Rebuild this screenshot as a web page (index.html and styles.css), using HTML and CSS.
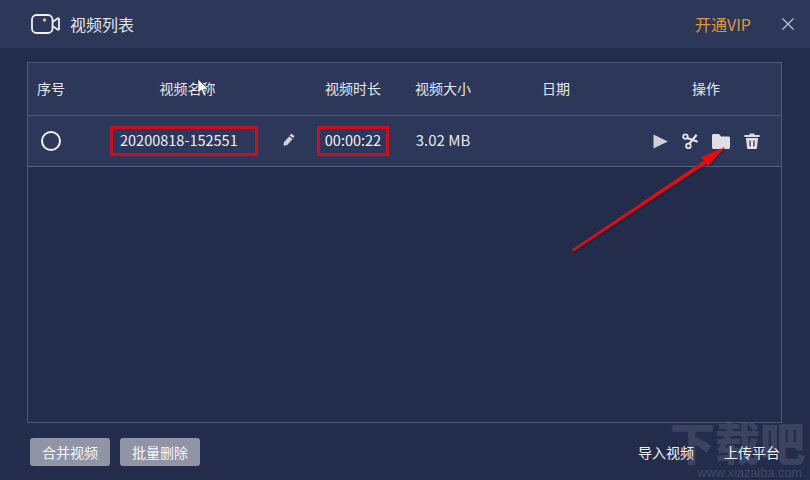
FILE: index.html
```html
<!DOCTYPE html>
<html lang="zh">
<head>
<meta charset="utf-8">
<title>视频列表</title>
<link rel="stylesheet" href="styles.css">
</head>
<body>
<div class="app">
  <div class="watermark">
    <span class="wm-big">下载吧</span>
    <span class="wm-url">www.xiazaiba.com</span>
  </div>
  <header class="titlebar">
    <svg class="cam" width="29" height="20" viewBox="0 0 29 20">
      <rect x="1" y="1" width="20.500" height="18" rx="4.500" fill="none" stroke="#eef0f4" stroke-width="1.800"/>
      <path d="M21.500 8 L26.500 4.500 Q28 3.800 28 5.200 V14.800 Q28 16.200 26.500 15.500 L21.500 12" fill="none" stroke="#eef0f4" stroke-width="1.800"/>
      <circle cx="13.500" cy="6" r="1.700" fill="#d8c080"/>
    </svg>
    <span class="title">视频列表</span>
    <span class="vip">开通VIP</span>
    <svg class="close" width="12" height="12" viewBox="0 0 12 12"><path d="M.5 .5 L11.500 11.500 M11.500 .5 L.5 11.500" stroke="#b4bacb" stroke-width="1.400"/></svg>
  </header>
  <main class="content">
    <section class="table">
      <div class="row head">
        <div class="c c-seq">序号</div>
        <div class="c c-name">视频名称</div>
        <div class="c c-dur">视频时长</div>
        <div class="c c-size">视频大小</div>
        <div class="c c-date">日期</div>
        <div class="c c-ops">操作</div>
      </div>
      <div class="row item">
        <div class="c c-seq"><span class="radio"></span></div>
        <div class="c c-name name-cell">
          <span class="mark mark-name">20200818-152551</span>
          <svg class="pencil" width="12" height="13" viewBox="0 0 12 13"><path d="M8 .6 L11.500 3 L10.200 5.100 L6.700 2.700 Z M6.100 3.500 L9.600 5.900 L4.300 12.100 L.6 12.800 L.9 9.300 Z" fill="#cfd2db"/></svg>
        </div>
        <div class="c c-dur"><span class="mark mark-dur">00:00:22</span></div>
        <div class="c c-size">3.02 MB</div>
        <div class="c c-date"></div>
        <div class="c c-ops ops">
          <svg width="15" height="15" viewBox="0 0 15 15"><path d="M.5 .5 L14.800 7.500 L.5 14.500 Z" fill="#cfd1d8"/></svg>
          <svg width="16" height="16" viewBox="0 0 16 16"><g fill="none" stroke="#e4e5ea"><circle cx="3.400" cy="3.600" r="2.300" stroke-width="1.800"/><circle cx="6.400" cy="13" r="2.300" stroke-width="1.800"/><path d="M5.200 5 L15.600 8.800 M7.400 10.800 L14.600 1.800" stroke-width="2.200"/></g></svg>
          <svg width="18" height="15" viewBox="0 0 18 15"><path d="M1.400 0 H7 L9 2.400 H16.600 Q18 2.400 18 3.800 V13.600 Q18 15 16.600 15 H1.400 Q0 15 0 13.600 V1.400 Q0 0 1.400 0 Z" fill="#e0e0e4"/></svg>
          <svg width="16" height="16" viewBox="0 0 16 16"><path d="M5.600 2 V.4 H10.400 V2 H15.600 V4 H.4 V2 Z M2 5 H14 L13 15 Q13 16 12 16 H4 Q3 16 3 15 Z" fill="#e0e0e4"/><path d="M6 7.500 V13.500 M10 7.500 V13.500" stroke="#2d3759" stroke-width="1.300"/></svg>
        </div>
      </div>
    </section>
    <footer class="actions">
      <button class="btn">合并视频</button>
      <button class="btn">批量删除</button>
      <div class="links">
        <span>导入视频</span>
        <span>上传平台</span>
      </div>
    </footer>
  </main>
  <svg class="overlay" width="810" height="480" viewBox="0 0 810 480">
    <defs><filter id="s" x="-10%" y="-10%" width="120%" height="120%"><feDropShadow dx="1" dy="1" stdDeviation="1" flood-color="#0c1020" flood-opacity=".5"/></filter></defs>
    <path d="M572 249.500 L704 160.500 L701 157 L725 147 L708 166 L706 163.800 L573 251.500 Z" fill="#e30f14" filter="url(#s)"/>
    <path d="M198 79 V93 L201.500 90 L204 96 L206 95 L203.500 89.500 L208 89 Z" fill="#fff" stroke="#222" stroke-width=".6"/>
  </svg>
</div>
</body>
</html>
```

FILE: styles.css
```css
* { box-sizing: border-box; }
html, body { margin: 0; padding: 0; }
body {
  width: 810px;
  height: 480px;
  overflow: hidden;
  background: #232d4b;
  font-family: "Noto Sans CJK SC", "Noto Sans", sans-serif;
  font-size: 14px;
  color: #e6e8ee;
}
.app { position: relative; width: 810px; height: 480px; display: flex; flex-direction: column; }
.titlebar {
  position: relative;
  height: 48px;
  flex: none;
  display: flex;
  align-items: center;
  padding: 0 16px 0 31px;
  background: #2d3759;
}
.cam { margin-right: 10px; margin-top: -1px; }
.title { font-size: 16px; color: #e3e5eb; flex: 1; }
.vip { font-size: 16px; color: #e2963a; margin-right: 31px; }
.content { position: relative; flex: 1; display: flex; flex-direction: column; padding: 14px 28px 14px 27px; }
.table {
  height: 361px;
  flex: none;
  border: 1px solid #4d5877;
}
.row { display: flex; background: #2d3759; }
.head { height: 53px; border-bottom: 1px solid #4d5877; padding-bottom: 3px; }
.item { height: 51px; border-bottom: 1px solid #5a6482; }
.c { display: flex; align-items: center; justify-content: center; }
.c-seq { width: 46px; }
.c-name { width: 227px; }
.c-dur { width: 104px; }
.c-size { width: 76px; }
.c-date { width: 150px; }
.c-ops { width: 150px; }
.item .c-size { font-size: 15px; padding-bottom: 3px; }
.radio { width: 20px; height: 20px; border: 2px solid #eef0f4; border-radius: 50%; }
.name-cell { justify-content: flex-start; padding-left: 36px; }
.mark { border: 3px solid #c90f1c; font-size: 14.500px; color: #f0f1f5; display: flex; align-items: center; padding-bottom: 3px; }
.mark-name { width: 148px; height: 30px; padding-left: 7px; }
.mark-dur { width: 72px; height: 30px; justify-content: center; }
.pencil { margin-left: 25px; margin-top: -3px; }
.ops { gap: 14px; }
.actions { flex: 1; display: flex; align-items: flex-start; padding: 15px 0 0 3px; gap: 10px; }
.btn {
  width: 80px;
  height: 28px;
  border: 0;
  padding: 0;
  border-radius: 3px;
  background: #8f95a5;
  color: #f4f5f7;
  font-family: inherit;
  font-size: 14px;
}
.links {
  margin-left: auto;
  margin-right: 2px;
  display: flex;
  gap: 30px;
  height: 28px;
  align-items: center;
  color: #f2f3f6;
  font-size: 14px;
}
.watermark {
  position: absolute;
  right: 5px;
  top: 417px;
  display: flex;
  flex-direction: column;
  align-items: flex-end;
}
.wm-big { font-size: 45px; line-height: 50px; font-weight: 900; color: #3a4461; }
.wm-url { font-size: 12.500px; line-height: 13px; color: #3f4966; letter-spacing: .1px; font-family: "Liberation Sans", sans-serif; margin-right: 3px; }
.overlay { position: absolute; left: 0; top: 0; pointer-events: none; }
```
